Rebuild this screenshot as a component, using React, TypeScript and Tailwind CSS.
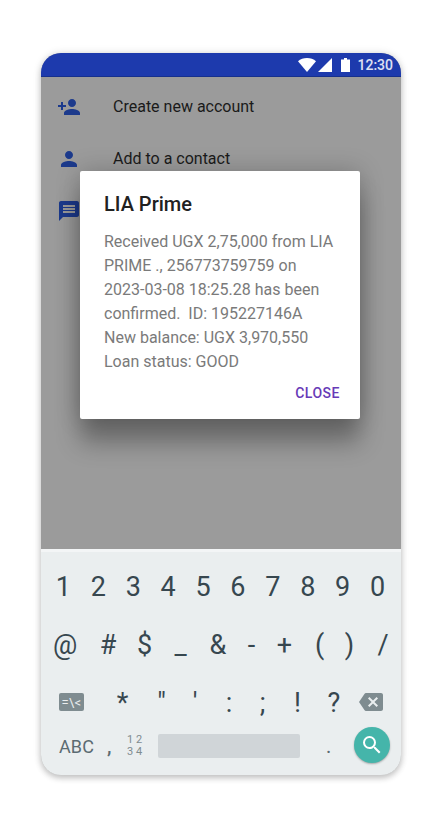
import type { ReactNode } from "react";
import { MdBackspace, MdMessage, MdPerson, MdPersonAdd, MdSearch } from "react-icons/md";

function StatusBar() {
  return (
    <header className="flex h-6 items-center border-b border-[#16308d] bg-[#1d3aad] pr-2 text-white">
      <svg className="mt-px ml-auto h-[14px] w-[18px]" viewBox="0 0 18 14" fill="currentColor">
        <path d="M9 14 0 3.2C2.4 1.2 5.500 0 9 0s6.600 1.200 9 3.200z" />
      </svg>
      <svg className="mt-px ml-[2px] h-[14px] w-[14px]" viewBox="0 0 14 14" fill="currentColor">
        <path d="M0 14 14 0v14z" />
      </svg>
      <svg className="mt-px ml-[9px] h-[14px] w-[9px]" viewBox="0 0 9 14" fill="currentColor">
        <path d="M0 1.400h3V0h3v1.400h3V14H0z" />
      </svg>
      <span className="ml-[7px] text-sm leading-[22px] font-medium text-white/85">12:30</span>
    </header>
  );
}

function ActionRow({ icon, label }: { icon: ReactNode; label?: string }) {
  return (
    <li className="flex h-[52px] items-center gap-8 pl-4">
      <span className="text-2xl text-[#1c3a8c]">{icon}</span>
      <span className="text-base text-[#1a1a1a]">{label}</span>
    </li>
  );
}

function MessageDialog() {
  return (
    <section className="absolute top-[118px] left-[39px] flex h-[248px] w-[280px] flex-col rounded-[2px] bg-white px-6 pt-5 shadow-[0_24px_24px_rgba(0,0,0,0.3),0_0_24px_rgba(0,0,0,0.22)]">
      <h1 className="text-xl leading-[26px] font-medium text-[#212121]">LIA Prime</h1>
      <p className="mt-[13px] text-base leading-6 whitespace-pre text-[#7a7a7a]">
        {"Received UGX 2,75,000 from LIA\nPRIME ., 256773759759 on\n2023-03-08 18:25.28 has been\nconfirmed.  ID: 195227146A\nNew balance: UGX 3,970,550\nLoan status: GOOD"}
      </p>
      <button className="mt-[9px] -mr-1 self-end text-sm leading-5 font-medium tracking-[0.5px] text-[#673ab7]">CLOSE</button>
    </section>
  );
}

function Keyboard() {
  return (
    <section className="h-[226px] border-t-[3px] border-[#f3f5f6] bg-[#eaeeef] pt-[6px] text-[27px] text-[#37474f]">
      <div className="ml-[5px] grid h-[59px] w-[349px] grid-cols-10 items-center text-center">
        {"1234567890".split("").map((k) => (
          <span key={k}>{k}</span>
        ))}
      </div>
      <div className="ml-px grid h-[57px] grid-cols-[46px_40px_33px_39px_36px_31px_35px_35px_25px_42px] items-center text-center">
        {"@#$_&-+()/".split("").map((k) => (
          <span key={k}>{k}</span>
        ))}
      </div>
      <div className="ml-[6px] grid h-[57px] grid-cols-[49px_53px_25px_42px_26px_41px_29px_44px_30px] items-center justify-items-center">
        <span className="-mt-px flex h-[18px] w-[25px] items-center justify-center rounded-[2px] bg-[#7f8c90] text-[13px] leading-none tracking-[0.3px] text-[#eaeeef]">
          =\&lt;
        </span>
        {"*\"':;!?".split("").map((k) => (
          <span key={k} className="mt-px">{k}</span>
        ))}
        <MdBackspace className="-mt-px size-6 text-[#7f8c90]" />
      </div>
      <div className="flex h-[30px] items-center pl-[18px] text-[#5b6b72]">
        <span className="mt-[2px] w-[48px] text-lg tracking-[0.1px]">ABC</span>
        <span className="w-[20px] text-xl font-medium">,</span>
        <span className="grid w-[31px] grid-cols-[9px_9px] text-[11px] leading-3 text-[#7f8c90]">
          <span>1</span>
          <span>2</span>
          <span>3</span>
          <span>4</span>
        </span>
        <span className="h-6 w-[142px] rounded-[2px] bg-[#d0d5d8]" />
        <span className="w-[54px] pl-[26px] text-xl">.</span>
        <span className="-mt-[2px] flex size-9 shrink-0 items-center justify-center rounded-full bg-[#45b5aa] text-2xl text-white shadow-[0_1px_2px_rgba(0,0,0,0.3)]">
          <MdSearch />
        </span>
      </div>
    </section>
  );
}

export default function App() {
  return (
    <div className="h-[833px] w-[446px] bg-white pt-[53px] pl-[41px] font-[Roboto,sans-serif]">
      <div className="w-[360px] rounded-[20px] shadow-[0_3px_6px_rgba(0,0,0,0.2),0_0_8px_rgba(0,0,0,0.12)]">
        <main className="relative h-[722px] overflow-hidden rounded-[20px] bg-[#9b9b9b]">
          <StatusBar />
          <div className="h-[472px] overflow-hidden pt-1">
            <ul>
              <ActionRow icon={<MdPersonAdd />} label="Create new account" />
              <ActionRow icon={<MdPerson />} label="Add to a contact" />
              <ActionRow icon={<MdMessage />} />
            </ul>
          </div>
          <MessageDialog />
          <Keyboard />
        </main>
      </div>
    </div>
  );
}
